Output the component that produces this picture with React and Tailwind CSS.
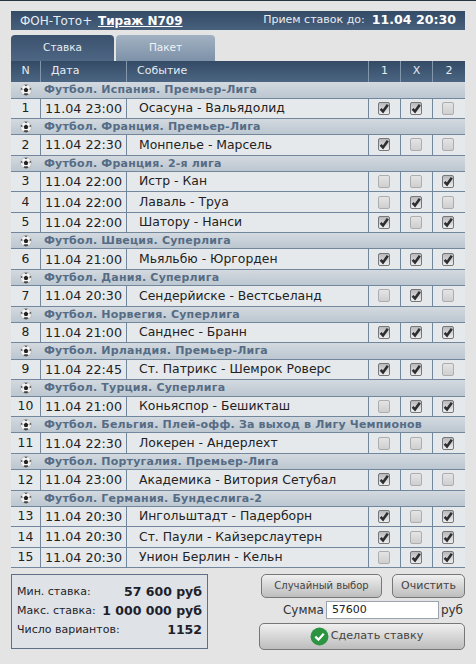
import React from 'react';

const rows = [
  { league: 'Футбол. Испания. Премьер-Лига', n: 1, date: '11.04 23:00', event: 'Осасуна - Вальядолид', picks: [1, 1, 0] },
  { league: 'Футбол. Франция. Премьер-Лига', n: 2, date: '11.04 22:30', event: 'Монпелье - Марсель', picks: [1, 0, 0] },
  { league: 'Футбол. Франция. 2-я лига', n: 3, date: '11.04 22:00', event: 'Истр - Кан', picks: [0, 0, 1] },
  { n: 4, date: '11.04 22:00', event: 'Лаваль - Труа', picks: [0, 1, 0] },
  { n: 5, date: '11.04 22:00', event: 'Шатору - Нанси', picks: [1, 0, 1] },
  { league: 'Футбол. Швеция. Суперлига', n: 6, date: '11.04 21:00', event: 'Мьяльбю - Юргорден', picks: [1, 1, 1] },
  { league: 'Футбол. Дания. Суперлига', n: 7, date: '11.04 20:30', event: 'Сендерйиске - Вестсьеланд', picks: [0, 1, 0] },
  { league: 'Футбол. Норвегия. Суперлига', n: 8, date: '11.04 21:00', event: 'Санднес - Бранн', picks: [1, 1, 1] },
  { league: 'Футбол. Ирландия. Премьер-Лига', n: 9, date: '11.04 22:45', event: 'Ст. Патрикс - Шемрок Роверс', picks: [1, 1, 0] },
  { league: 'Футбол. Турция. Суперлига', n: 10, date: '11.04 21:00', event: 'Коньяспор - Бешикташ', picks: [0, 1, 1] },
  { league: 'Футбол. Бельгия. Плей-офф. За выход в Лигу Чемпионов', n: 11, date: '11.04 22:30', event: 'Локерен - Андерлехт', picks: [0, 0, 1] },
  { league: 'Футбол. Португалия. Премьер-Лига', n: 12, date: '11.04 23:00', event: 'Академика - Витория Сетубал', picks: [1, 0, 0] },
  { league: 'Футбол. Германия. Бундеслига-2', n: 13, date: '11.04 20:30', event: 'Ингольштадт - Падерборн', picks: [1, 0, 1] },
  { n: 14, date: '11.04 20:30', event: 'Ст. Паули - Кайзерслаутерн', picks: [1, 0, 1] },
  { n: 15, date: '11.04 20:30', event: 'Унион Берлин - Кельн', picks: [0, 1, 1] },
];

const gridCols = 'grid grid-cols-[29px_86px_242px_32px_32px_33px]';

function Ball() {
  return (
    <svg width="12" height="12" viewBox="0 0 12 12" className="shrink-0">
      <circle cx="6" cy="6" r="5.5" fill="#f4f4f4" stroke="#a8a8a8" strokeWidth="0.6" />
      <path d="M6 3.6 8.3 5.3 7.4 8 4.6 8 3.7 5.3Z" fill="#222" />
      <path d="M4.2 .8 7.8 .8 6 2.2ZM.6 5 2.2 3.4 2.4 6.4ZM11.4 5 9.8 3.4 9.6 6.4ZM3.4 10.6 4.4 9.2 7.6 9.2 8.6 10.6 6 11.5Z" fill="#444" />
    </svg>
  );
}

function Check({ on }) {
  return (
    <span
      className={`relative block w-[12px] h-[13px] rounded-[2px] border ${
        on
          ? 'border-[#777] bg-gradient-to-b from-[#b9b9b9] to-[#eeeeee]'
          : 'border-[#adadad] bg-gradient-to-b from-[#e4e4e4] to-[#cfcfcf]'
      }`}
    >
      {on ? (
        <svg viewBox="0 0 12 13" className="absolute -left-px -top-px w-[12px] h-[13px]">
          <path d="M2.6 6.8 5 9.4 9.8 2.8" fill="none" stroke="#2b2f33" strokeWidth="2.6" />
        </svg>
      ) : null}
    </span>
  );
}

function LeagueRow({ name }) {
  return (
    <div className="flex items-center h-[16.5px] pl-[9px] gap-[12px] border-b border-[#73879c] bg-gradient-to-b from-[#d3d9df] to-[#bcc7d1] overflow-hidden">
      <Ball />
      <span className="pt-px font-bold text-[11px] tracking-[0.2px] whitespace-nowrap text-[#566c85]">{name}</span>
    </div>
  );
}

function GameRow({ row }) {
  return (
    <div className={`${gridCols} h-[20.3px] border-b border-[#73879c] bg-[#e6e9ec] text-[12.4px] text-[#222]`}>
      <div className="flex items-center justify-center">{row.n}</div>
      <div className="flex items-center justify-center border-l border-[#73879c] text-[12.7px]">{row.date}</div>
      <div className="flex items-center pl-[12px] border-l border-[#73879c] whitespace-nowrap">{row.event}</div>
      {row.picks.map((on, i) => (
        <div key={i} className="flex items-center justify-center pr-[2px] border-l border-[#73879c]">
          <Check on={on} />
        </div>
      ))}
    </div>
  );
}

function Button({ className, children }) {
  return (
    <div
      className={`flex items-center justify-center rounded-[5px] border border-[#777] bg-gradient-to-b from-[#f0f0f0] to-[#bdbdbd] text-[#444] ${className}`}
    >
      {children}
    </div>
  );
}

export default function App() {
  return (
    <div className="w-[476px] h-[664px] overflow-hidden border-t border-[#26343f] bg-[#e4e4e4] pt-[10px] px-[11px] font-['DejaVu_Sans',sans-serif]">
      <div className="w-[454px]">
        <div className="flex items-center justify-between h-[19px] pl-[9px] pr-[9px] bg-gradient-to-b from-[#344b66] to-[#47607c] text-[#e8edf2]">
          <div className="text-[12px]">
            ФОН-Тото+ <span className="ml-[2px] font-bold underline text-white">Тираж N709</span>
          </div>
          <div className="flex items-center gap-[7px] text-[11px]">
            <span>Прием ставок до:</span>
            <span className="font-bold text-[12.6px] text-white">11.04 20:30</span>
          </div>
        </div>

        <div className="flex gap-[2px] mt-[5px] h-[26px]">
          <div className="flex items-center justify-center w-[103px] rounded-t-[4px] bg-gradient-to-b from-[#3b526e] to-[#4d6683] text-[10.5px] text-[#e6ecf2]">
            Ставка
          </div>
          <div className="flex items-center justify-center w-[99px] rounded-t-[4px] bg-gradient-to-b from-[#a3b2c2] to-[#7d91a8] text-[10.5px] text-[#f0f3f6]">
            Пакет
          </div>
        </div>

        <div className={`${gridCols} h-[21px] bg-gradient-to-b from-[#344b66] to-[#4b6582] text-[11px] text-[#e6ecf2]`}>
          <div className="flex items-center justify-center">N</div>
          <div className="flex items-center pl-[10px] border-l border-[#8296ac]">Дата</div>
          <div className="flex items-center pl-[10px] border-l border-[#8296ac]">Событие</div>
          <div className="flex items-center justify-center border-l border-[#8296ac]">1</div>
          <div className="flex items-center justify-center border-l border-[#8296ac]">X</div>
          <div className="flex items-center justify-center border-l border-[#8296ac]">2</div>
        </div>

        {rows.map((row) => (
          <React.Fragment key={row.n}>
            {row.league && <LeagueRow name={row.league} />}
            <GameRow row={row} />
          </React.Fragment>
        ))}

        <div className="flex mt-[6px]">
          <div className="flex flex-col justify-center gap-[2px] w-[197px] h-[75px] px-[5px] border border-[#5f7086] bg-[#dfe2e7] text-[#1d1f2a]">
            <div className="flex items-center justify-between h-[17px]">
              <span className="text-[11px]">Мин. ставка:</span>
              <span className="font-bold text-[12.5px]">57 600 руб</span>
            </div>
            <div className="flex items-center justify-between h-[17px]">
              <span className="text-[11px]">Макс. ставка:</span>
              <span className="font-bold text-[12.5px]">1 000 000 руб</span>
            </div>
            <div className="flex items-center justify-between h-[17px]">
              <span className="text-[11px]">Число вариантов:</span>
              <span className="font-bold text-[12.5px]">1152</span>
            </div>
          </div>

          <div className="flex flex-col items-end flex-1">
            <div className="flex gap-[10px]">
              <Button className="w-[121px] h-[24px] text-[10px]">Случайный выбор</Button>
              <Button className="w-[73px] h-[24px] text-[11px]">Очистить</Button>
            </div>
            <div className="flex items-center h-[19px] mt-[3px] pr-[2px] text-[12px] text-[#333]">
              <span>Сумма</span>
              <div className="flex items-center w-[113px] h-[18px] ml-[2px] mr-[2px] pl-[5px] bg-white border border-[#9aa4ae] text-[11px] text-[#222]">
                57600
              </div>
              <span>руб</span>
            </div>
            <Button className="w-[206px] h-[27px] mt-[3px] gap-[2px] pl-[9px] text-[11.2px]">
              <svg width="19" height="19" viewBox="0 0 18 18">
                <circle cx="9" cy="9" r="8.5" fill="#2a9440" />
                <path d="M5 9.2 8 12 13 6.4" fill="none" stroke="#fff" strokeWidth="2.2" />
              </svg>
              Сделать ставку
            </Button>
          </div>
        </div>
      </div>
    </div>
  );
}
